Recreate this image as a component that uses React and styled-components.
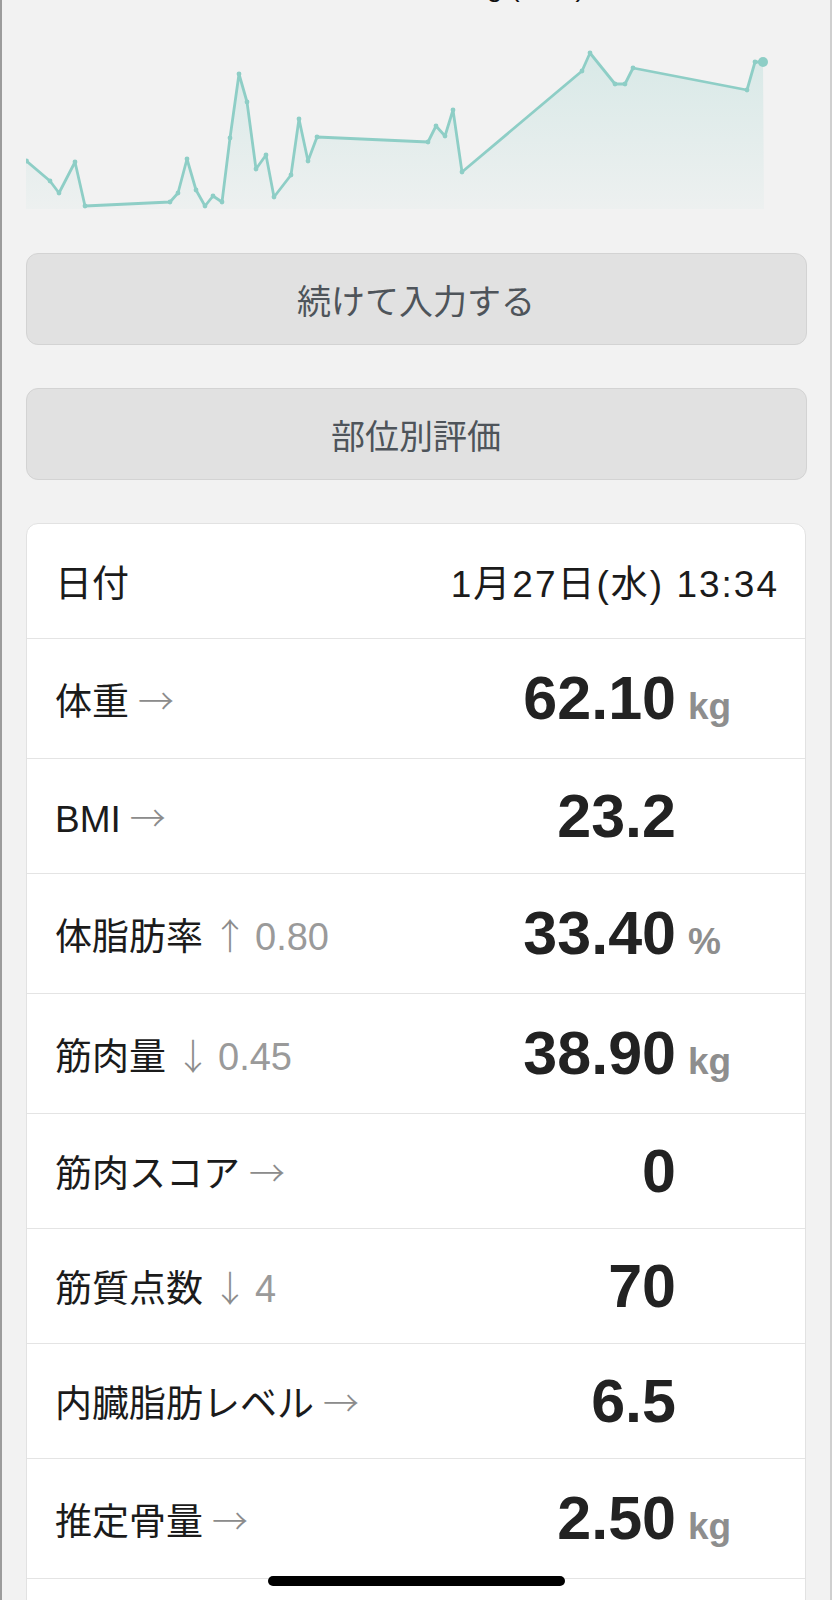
import React from "react";
import styled, { createGlobalStyle } from "styled-components";

const Global = createGlobalStyle`
  html, body { margin: 0; padding: 0; background: #f2f2f2; }
  body { font-family: "Liberation Sans", "Noto Sans CJK JP", sans-serif; }
  * { box-sizing: border-box; }
`;

const Screen = styled.div`
  width: 832px;
  min-height: 1600px;
  background: #f2f2f2;
  border-left: 2px solid #9c9c9c;
  border-right: 2px solid #cfcfcf;
  padding: 0 24px 40px;
  overflow: hidden;
`;

const Caption = styled.div`
  margin-top: -30px;
  height: 34px;
  line-height: 34px;
  text-align: center;
  font-size: 28px;
  color: #111;
  white-space: nowrap;
`;

const ChartSvg = styled.svg`
  display: block;
  margin-top: 26px;
  width: 780px;
  height: 190px;
`;

const ButtonStack = styled.div`
  display: flex;
  flex-direction: column;
  gap: 43px;
  margin-top: 33px;
`;

const ActionButton = styled.button`
  display: flex;
  align-items: center;
  justify-content: center;
  width: 781px;
  margin-left: -0.5px;
  height: 92px;
  border-radius: 12px;
  background: #e1e1e1;
  border: 1px solid #d3d3d3;
  font-family: "Noto Sans CJK JP", sans-serif;
  font-size: 34px;
  color: #4e545a;
  padding: 0;
`;

const Card = styled.div`
  margin-top: 43px;
  background: #fff;
  border: 1px solid #e2e2e2;
  border-radius: 12px;
  overflow: hidden;
`;

const Row = styled.div`
  display: flex;
  align-items: center;
  height: ${(p) => (p.$tall ? 120 : 115)}px;
  border-bottom: 1px solid #e4e4e4;
  padding-left: 28px;
  padding-right: ${(p) => (p.$date ? 28 : 0)}px;
`;

const Label = styled.div`
  flex: 1;
  display: flex;
  align-items: baseline;
  font-size: 37px;
  color: #1b1b1b;
  white-space: nowrap;
`;

const Trend = styled.span`
  display: inline-flex;
  align-items: baseline;
  gap: 7px;
  margin-left: 9px;
  color: #9a9a9a;
  font-size: 38px;
`;

const Arrow = styled.span`
  font-family: "Noto Sans CJK JP", sans-serif;
  font-size: 36px;
  font-weight: 300;
  color: #8c8c8c;
`;

const DateText = styled.div`
  font-size: 37px;
  letter-spacing: 2px;
  margin-right: -2px;
  color: #1b1b1b;
  white-space: nowrap;
`;

const ValueGroup = styled.div`
  display: flex;
  align-items: baseline;
`;

const Value = styled.span`
  font-size: 61px;
  font-weight: 700;
  color: #222;
  line-height: 1;
  text-align: right;
`;

const Unit = styled.span`
  width: 129px;
  padding-left: 12px;
  font-size: 37px;
  font-weight: 700;
  color: #8e8e8e;
`;

const HomeIndicator = styled.div`
  position: fixed;
  left: 50%;
  bottom: 14px;
  width: 297px;
  height: 10px;
  margin-left: -148px;
  border-radius: 5px;
  background: #000;
`;

const points = [
  [26.5, 161], [50, 181], [59, 193], [75, 162], [85, 206], [170, 202], [178, 193],
  [187, 159], [196, 190], [205, 206], [213, 196], [222, 202], [230, 138], [239, 74],
  [247, 102], [256, 169], [266, 155], [274, 197], [291, 175], [299, 119], [308, 161],
  [317, 137], [428, 142], [436, 126], [445, 136], [453, 110], [462, 172], [582, 71],
  [590, 53], [615, 84], [625, 84], [633, 68], [747, 90], [755, 62], [763, 62],
];

function Chart() {
  const pts = points.map(([x, y]) => [x - 26, y - 30]);
  const line = pts.map(([x, y]) => `${x},${y}`).join(" ");
  const area = `0,${pts[0][1]} ${line} ${pts[pts.length - 1][0] + 1},179 0,179`;
  const last = pts[pts.length - 1];
  return (
    <ChartSvg viewBox="0 0 780 190">
      <defs>
        <linearGradient id="fillGrad" x1="0" y1="0" x2="0" y2="1">
          <stop offset="0" stopColor="#8fcfc8" stopOpacity="0.26" />
          <stop offset="1" stopColor="#8fcfc8" stopOpacity="0.05" />
        </linearGradient>
      </defs>
      <polygon points={area} fill="url(#fillGrad)" />
      <polyline points={line} fill="none" stroke="#8ecec6" strokeWidth="2.8" strokeLinejoin="round" />
      {pts.slice(0, -1).map(([x, y], i) => (
        <circle key={i} cx={x} cy={y} r="2.4" fill="#8ecec6" />
      ))}
      <circle cx={last[0]} cy={last[1]} r="5" fill="#8ecec6" />
    </ChartSvg>
  );
}

const rows = [
  { label: "体重", arrow: "→", value: "62.10", unit: "kg" },
  { label: "BMI", arrow: "→", value: "23.2" },
  { label: "体脂肪率", arrow: "↑", delta: "0.80", value: "33.40", unit: "%" },
  { label: "筋肉量", arrow: "↓", delta: "0.45", value: "38.90", unit: "kg" },
  { label: "筋肉スコア", arrow: "→", value: "0" },
  { label: "筋質点数", arrow: "↓", delta: "4", value: "70" },
  { label: "内臓脂肪レベル", arrow: "→", value: "6.5" },
  { label: "推定骨量", arrow: "→", value: "2.50", unit: "kg" },
  { label: "基礎代謝量", arrow: "→", value: "1180", unit: "kcal" },
];

export default function App() {
  return (
    <>
      <Global />
      <Screen>
        <Caption>体重の推移 62.10 kg (前回)</Caption>
        <Chart />
        <ButtonStack>
          <ActionButton>続けて入力する</ActionButton>
          <ActionButton>部位別評価</ActionButton>
        </ButtonStack>
        <Card>
          <Row $date>
            <Label>日付</Label>
            <DateText>1月27日(水) 13:34</DateText>
          </Row>
          {rows.map((r) => (
            <Row key={r.label} $tall={!!r.unit}>
              <Label>
                {r.label}
                <Trend>
                  <Arrow>{r.arrow}</Arrow>
                  {r.delta && <span>{r.delta}</span>}
                </Trend>
              </Label>
              <ValueGroup>
                <Value>{r.value}</Value>
                <Unit>{r.unit}</Unit>
              </ValueGroup>
            </Row>
          ))}
        </Card>
      </Screen>
      <HomeIndicator />
    </>
  );
}
